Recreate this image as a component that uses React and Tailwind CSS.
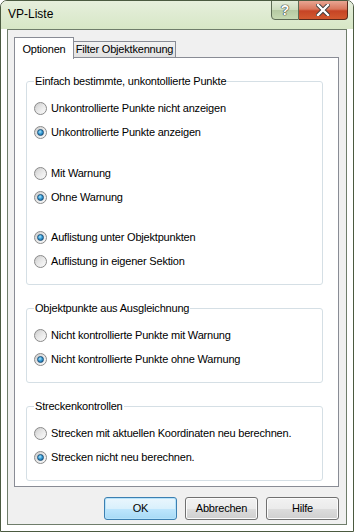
import React, { useState } from "react";

const font = "font-['Segoe_UI','Liberation_Sans',Arial,sans-serif]";

const Radio = ({ checked, label, onSelect }) => (
  <label className="flex items-center h-[24px] cursor-default" onClick={onSelect}>
    <span className="relative flex items-center justify-center w-[13px] h-[13px] rounded-full border border-[#8a8a8a] bg-[linear-gradient(135deg,#c9c9c9_0%,#e6e6e6_45%,#fbfbfb_100%)]">
      {checked ? (
        <span className="w-[7px] h-[7px] rounded-full border border-[#1b4f78] bg-[radial-gradient(circle_at_40%_35%,#aee6fb_0%,#3a9fd8_45%,#0e5a93_100%)]" />
      ) : (
        <span className="w-[7px] h-[7px] rounded-full bg-[linear-gradient(135deg,#d9d9d9,#f7f7f7)]" />
      )}
    </span>
    <span className="ml-[4px] text-[11px] tracking-[-0.2px] text-black leading-none">
      {label}
    </span>
  </label>
);

const Group = ({ title, children, className = "" }) => (
  <div className={`relative border border-[#d5dfe5] rounded-[3px] pl-[7px] pt-[14px] pb-[11px] ${className}`}>
    <span className="absolute -top-[8px] left-[7px] bg-white px-[1px] text-[11px] tracking-[-0.2px] leading-[14px] text-black">
      {title}
    </span>
    {children}
  </div>
);

const Btn = ({ children, isDefault }) => (
  <button
    className={`w-[73px] h-[23px] rounded-[3px] border text-[11px] tracking-[-0.2px] text-black ${
      isDefault
        ? "border-[#3c7fb1] shadow-[inset_0_0_0_1px_#b6e3fb] bg-[linear-gradient(to_bottom,#eaf6fd_0%,#d9f0fc_50%,#bee6fd_51%,#a7d9f5_100%)]"
        : "border-[#707070] shadow-[inset_0_0_0_1px_#fcfcfc] bg-[linear-gradient(to_bottom,#f2f2f2_0%,#ebebeb_50%,#dddddd_51%,#cfcfcf_100%)]"
    }`}
  >
    {children}
  </button>
);

export default function App() {
  const [a, setA] = useState(1);
  const [b, setB] = useState(1);
  const [c, setC] = useState(0);
  const [d, setD] = useState(1);
  const [e, setE] = useState(1);

  return (
    <div
      className={`${font} w-[354px] h-[532px] overflow-hidden rounded-t-[7px] border border-[#4b5a40] bg-[linear-gradient(to_bottom,rgba(255,255,255,0)_25%,rgba(70,88,45,0.75)_60%,rgba(90,110,60,0.7)_100%)_left_top/7px_100%_no-repeat,linear-gradient(to_right,#b8c9a5_0%,#d8e7ca_30%,#d2e5bd_70%,#bfdc9c_100%)]`}
    >
      {/* title bar */}
      <div className="flex items-start justify-between h-[28px] bg-[linear-gradient(to_bottom,#e6efdc_0%,#d7e7c6_100%)]">
        <span className="mt-[5px] ml-[7px] text-[12px] text-black leading-[16px]">VP-Liste</span>
        <div className="flex mr-[5px] -mt-[1px]">
          <div className="flex items-center justify-center w-[28px] h-[20px] rounded-bl-[4px] border border-[#5d6b55] bg-[linear-gradient(to_bottom,#e3ecd9_0%,#ccdcbd_50%,#b5c9a2_51%,#c6d9b2_100%)]">
            <span className="text-[14px] font-bold text-white leading-none [text-shadow:0_0_1px_#333,0_0_1px_#333,0_0_1px_#333]">?</span>
          </div>
          <div className="flex items-center justify-center w-[49px] h-[20px] rounded-br-[4px] border border-l-0 border-[#5a2a1c] bg-[linear-gradient(to_bottom,#e8a592_0%,#d9775d_45%,#c64425_55%,#d2592f_100%)]">
            <svg width="14" height="12" viewBox="0 0 14 12">
              <path d="M2 1 L12 11 M12 1 L2 11" stroke="#3a3a3a" strokeWidth="4.2" strokeLinecap="square" />
              <path d="M2 1 L12 11 M12 1 L2 11" stroke="#ffffff" strokeWidth="2.4" strokeLinecap="square" />
            </svg>
          </div>
        </div>
      </div>

      {/* client area */}
      <div className="ml-[6px] w-[340px] h-[496px] border border-[#6f7d6b] bg-[#f0f0f0] pt-[7px] pl-[6px]">
        {/* tabs */}
        <div className="flex items-end h-[20px]">
          <div className="relative z-10 h-[22px] -mb-[2px] w-[60px] border border-b-0 border-[#898c95] bg-white text-[11px] tracking-[-0.2px] flex justify-center pt-[3px] text-black">
            Optionen
          </div>
          <div className="h-[16px] -ml-[1px] w-[103px] border border-b-0 border-[#898c95] bg-[linear-gradient(to_bottom,#f2f2f2,#e1e1e1)] text-[11px] tracking-[-0.2px] flex justify-center pt-[1px] leading-[13px] text-black">
            Filter Objektkennung
          </div>
        </div>

        {/* panel */}
        <div className="w-[325px] h-[430px] border border-[#898c95] bg-white pt-[23px] pl-[11px]">
          <Group title="Einfach bestimmte, unkontollierte Punkte" className="w-[297px]">
            <Radio label="Unkontrollierte Punkte nicht anzeigen" checked={a === 0} onSelect={() => setA(0)} />
            <Radio label="Unkontrollierte Punkte anzeigen" checked={a === 1} onSelect={() => setA(1)} />
            <div className="h-[17px]" />
            <Radio label="Mit Warnung" checked={b === 0} onSelect={() => setB(0)} />
            <Radio label="Ohne Warnung" checked={b === 1} onSelect={() => setB(1)} />
            <div className="h-[16px]" />
            <Radio label="Auflistung unter Objektpunkten" checked={c === 0} onSelect={() => setC(0)} />
            <Radio label="Auflistung in eigener Sektion" checked={c === 1} onSelect={() => setC(1)} />
          </Group>

          <Group title="Objektpunkte aus Ausgleichnung" className="w-[297px] mt-[23px]">
            <Radio label="Nicht kontrollierte Punkte mit Warnung" checked={d === 0} onSelect={() => setD(0)} />
            <Radio label="Nicht kontrollierte Punkte ohne Warnung" checked={d === 1} onSelect={() => setD(1)} />
          </Group>

          <Group title="Streckenkontrollen" className="w-[297px] mt-[23px]">
            <Radio label="Strecken mit aktuellen Koordinaten neu berechnen." checked={e === 0} onSelect={() => setE(0)} />
            <Radio label="Strecken nicht neu berechnen." checked={e === 1} onSelect={() => setE(1)} />
          </Group>
        </div>

        {/* buttons */}
        <div className="w-[325px] flex justify-end gap-[8px] mt-[10px]">
          <Btn isDefault>OK</Btn>
          <Btn>Abbrechen</Btn>
          <Btn>Hilfe</Btn>
        </div>
      </div>
    </div>
  );
}
